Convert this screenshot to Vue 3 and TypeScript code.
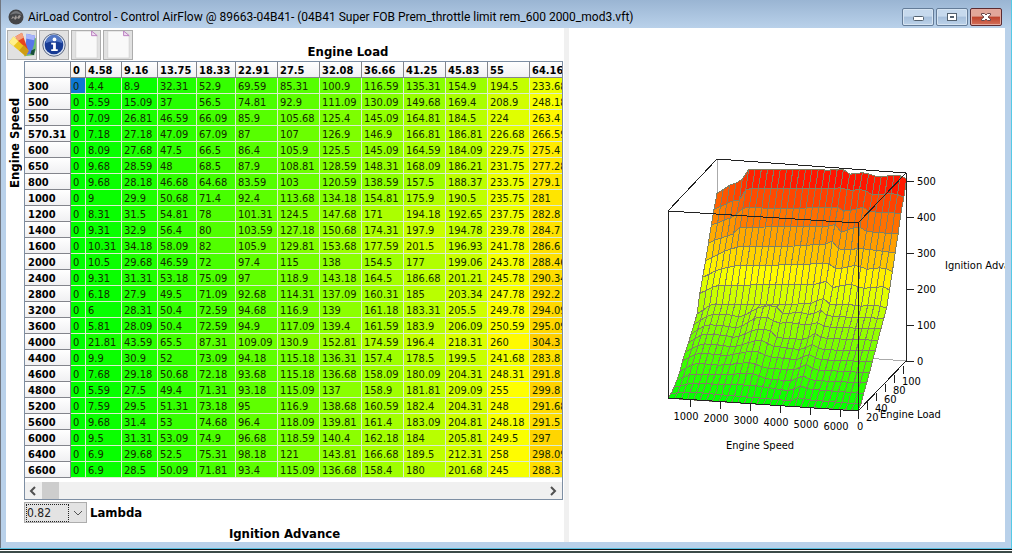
<script setup lang="ts">
import { ref } from 'vue'

const loads = ['0', '4.58', '9.16', '13.75', '18.33', '22.91', '27.5', '32.08', '36.66', '41.25', '45.83', '55', '64.16']
const columnWidths = [15, 36, 36, 39, 39, 42, 42, 42, 42, 42, 42, 42, 42]

const source = `
300|0 4.4 8.9 32.31 52.9 69.59 85.31 100.9 116.59 135.31 154.9 194.5 233.68
500|0 5.59 15.09 37 56.5 74.81 92.9 111.09 130.09 149.68 169.4 208.9 248.18
550|0 7.09 26.81 46.59 66.09 85.9 105.68 125.4 145.09 164.81 184.5 224 263.4
570.31|0 7.18 27.18 47.09 67.09 87 107 126.9 146.9 166.81 186.81 226.68 266.59
600|0 8.09 27.68 47.5 66.5 86.4 105.9 125.5 145.09 164.59 184.09 229.75 275.4
650|0 9.68 28.59 48 68.5 87.9 108.81 128.59 148.31 168.09 186.21 231.75 277.28
800|0 9.68 28.18 46.68 64.68 83.59 103 120.59 138.59 157.5 188.37 233.75 279.1
1000|0 9 29.9 50.68 71.4 92.4 113.68 134.18 154.81 175.9 190.5 235.75 281
1200|0 8.31 31.5 54.81 78 101.31 124.5 147.68 171 194.18 192.65 237.75 282.8
1400|0 9.31 32.9 56.4 80 103.59 127.18 150.68 174.31 197.9 194.78 239.78 284.7
1600|0 10.31 34.18 58.09 82 105.9 129.81 153.68 177.59 201.5 196.93 241.78 286.6
2000|0 10.5 29.68 46.59 72 97.4 115 138 154.5 177 199.06 243.78 288.46
2400|0 9.31 31.31 53.18 75.09 97 118.9 143.18 164.5 186.68 201.21 245.78 290.34
2800|0 6.18 27.9 49.5 71.09 92.68 114.31 137.09 160.31 185 203.34 247.78 292.2
3200|0 6 28.31 50.4 72.59 94.68 116.9 139 161.18 183.31 205.5 249.78 294.09
3600|0 5.81 28.09 50.4 72.59 94.9 117.09 139.4 161.59 183.9 206.09 250.59 295.09
4000|0 21.81 43.59 65.5 87.31 109.09 130.9 152.81 174.59 196.4 218.31 260 304.3
4400|0 9.9 30.9 52 73.09 94.18 115.18 136.31 157.4 178.5 199.5 241.68 283.8
4600|0 7.68 29.18 50.68 72.18 93.68 115.18 136.68 158.09 180.09 204.31 248.31 291.8
4800|0 5.59 27.5 49.4 71.31 93.18 115.09 137 158.9 181.81 209.09 255 299.8
5200|0 7.59 29.5 51.31 73.18 95 116.9 138.68 160.59 182.4 204.31 248 291.68
5600|0 9.68 31.4 53 74.68 96.4 118.09 139.81 161.4 183.09 204.81 248.18 291.5
6000|0 9.5 31.31 53.09 74.9 96.68 118.59 140.4 162.18 184 205.81 249.5 297
6400|0 6.9 29.68 52.5 75.31 98.18 121 143.81 166.68 189.5 212.31 258 298.09
6600|0 6.9 28.5 50.09 71.81 93.4 115.09 136.68 158.4 180 201.68 245 288.3`

const rows = source.trim().split('\n').map((line) => {
  const [speed, values] = line.split('|')
  return { speed, values: values.split(' ') }
})

function heat(value: number): string {
  const v = Math.max(0, Math.min(510, value))
  return v < 255 ? `rgb(${Math.round(v)},255,0)` : `rgb(255,${Math.round(510 - v)},0)`
}

const lambda = ref('0.82')
const tableView = ref<HTMLDivElement | null>(null)
function scrollTable(step: number) {
  tableView.value?.scrollBy({ left: step })
}

// Surface profiles, front to back, as x/y pairs in thirds of a chart unit.
const profiles: number[][] = [
  [25, 430, 592, 467],
  [34, 415, 90, 411, 400, 438, 415, 427, 450, 435, 600, 447],
  [45, 397, 90, 385, 280, 391, 390, 408, 420, 392, 450, 403, 610, 415],
  [50, 375, 90, 358, 150, 360, 280, 355, 320, 372, 400, 378, 425, 360, 455, 376, 617, 384],
  [58, 350, 105, 324, 180, 331, 270, 322, 320, 340, 410, 345, 435, 326, 465, 345, 625, 353],
  [67, 318, 115, 293, 200, 302, 285, 286, 325, 305, 420, 315, 440, 294, 475, 314, 635, 320],
  [76, 290, 125, 266, 200, 272, 215, 278, 300, 253, 335, 273, 430, 285, 450, 265, 485, 284, 643, 288],
  [85, 263, 130, 236, 200, 242, 225, 249, 290, 222, 330, 225, 350, 248, 440, 254, 458, 232, 490, 250, 651, 256],
  [93, 237, 140, 208, 215, 215, 232, 222, 290, 186, 325, 187, 355, 206, 380, 201, 446, 211, 467, 200, 497, 216, 660, 222],
  [102, 208, 150, 178, 215, 180, 240, 188, 300, 155, 345, 151, 365, 175, 430, 173, 455, 182, 478, 163, 505, 184, 669, 190],
  [110, 178, 155, 147, 200, 147, 300, 150, 345, 149, 450, 146, 490, 130, 515, 152, 560, 146, 595, 154, 650, 150, 680, 160],
  [120, 115, 170, 91, 470, 88, 500, 78, 518, 98, 570, 87, 610, 100, 670, 95, 688, 105],
  [130, 67, 175, 43, 240, 30, 370, 30, 505, 25, 530, 43, 590, 30, 620, 43, 670, 37, 695, 50],
  [137, 17, 190, -10, 235, -25, 400, -27, 500, -33, 515, -43, 540, -13, 600, -20, 702, -7],
  [148, -35, 160, -43, 220, -63, 240, -83, 400, -85, 500, -85, 525, -92, 543, -68, 595, -87, 620, -70, 712, -63],
  [157, -90, 225, -117, 250, -142, 370, -140, 510, -142, 530, -145, 555, -130, 610, -143, 630, -130, 722, -125],
  [165, -138, 220, -163, 240, -165, 260, -200, 510, -198, 540, -202, 570, -193, 610, -198, 635, -180, 705, -185, 728, -173],
  [173, -185, 210, -210, 242, -220, 265, -256, 530, -255, 548, -258, 570, -242, 615, -248, 640, -237, 680, -237, 720, -238, 740, -229],
]

function sample(profile: number[], x: number): number {
  if (x <= profile[0]) return profile[1]
  for (let i = 2; i < profile.length; i += 2) {
    if (x <= profile[i]) {
      const t = (x - profile[i - 2]) / (profile[i] - profile[i - 2])
      return profile[i - 1] + t * (profile[i + 1] - profile[i - 1])
    }
  }
  return profile[profile.length - 1]
}

interface Vertex { x: number; y: number; z: number }
const segments = 30
const lastProfile = profiles.length - 1
const mesh: Vertex[][] = profiles.map((profile, r) => {
  const depth = r / lastProfile
  return Array.from({ length: segments + 1 }, (_, c) => {
    const across = c / segments
    const px = 25 + depth * 146 + across * 569
    const x = 91 + px / 3
    const y = 227 + sample(profile, px) / 3
    return { x, y, z: (370 + 12.5 * across - 51 * depth - y) / 0.36 }
  })
})

const facets: { points: string; fill: string }[] = []
for (let r = lastProfile - 1; r >= 0; r--) {
  for (let c = 0; c < segments; c++) {
    const corners = [mesh[r][c], mesh[r][c + 1], mesh[r + 1][c + 1], mesh[r + 1][c]]
    facets.push({
      points: corners.map((p) => `${p.x.toFixed(1)},${p.y.toFixed(1)}`).join(' '),
      fill: heat(corners.reduce((sum, p) => sum + p.z, 0) / 4),
    })
  }
}

const speedTicks = [1000, 2000, 3000, 4000, 5000, 6000].map((value, i) => ({ value, x: 121 + i * 30, y: 371 + i * 2 }))
const loadTicks = [0, 20, 40, 60, 80, 100].map((value, i) => ({ value, x: 289 + i * 9, y: 383 - i * 9 }))
const heightTicks = [0, 100, 200, 300, 400, 500].map((value, i) => ({ value, y: 333 - i * 36 }))
</script>

<template>
  <main class="window">
    <header class="titlebar">
      <svg class="app-icon" viewBox="0 0 16 16" aria-hidden="true">
        <circle cx="8" cy="8" r="7.5" fill="#444548" />
        <path d="M2 6Q8-2 14 6Q8 3 2 6" fill="#74767a" />
        <path d="M3 10 5 7l1 2 2-3 1 3 2-3 2 1-2 3-2-1-2 2-1-2z" fill="#a29c99" />
      </svg>
      <h1>AirLoad Control - Control AirFlow @ 89663-04B41- (04B41 Super FOB Prem_throttle limit rem_600 2000_mod3.vft)</h1>
      <div class="window-buttons">
        <button type="button" aria-label="Minimize">
          <svg viewBox="0 0 30 16"><rect x="10.5" y="7.5" width="10" height="4" rx="1" fill="#fff" stroke="#53616f" /></svg>
        </button>
        <button type="button" aria-label="Maximize">
          <svg viewBox="0 0 30 16"><rect x="10.5" y="4.5" width="9" height="7" fill="#fff" stroke="#53616f" /><rect x="13.5" y="7.5" width="3" height="1" fill="#9db5cf" stroke="#53616f" /></svg>
        </button>
        <button type="button" class="close" aria-label="Close">
          <svg viewBox="0 0 30 16"><path d="M10.5 4.5h3l1.5 1.5 1.5-1.5h3v1.500l-2.500 2 2.500 2v1.500h-3l-1.500-1.500-1.500 1.500h-3v-1.500l2.500-2-2.500-2z" fill="#fff" stroke="#694648" /></svg>
        </button>
      </div>
    </header>

    <div class="client">
      <section class="editor">
        <div class="top">
          <div class="toolbar">
            <button type="button" aria-label="Colours">
              <svg viewBox="0 0 30 30">
                <path d="M17 27 27 6l3 2v12l-3 6z" fill="#72bd72" />
                <path d="M18 26 20 3l9 2-1 9-3 10z" fill="#5876e8" />
                <path d="m20 3 9 2-1 5-9-2z" fill="#a9b5fa" />
                <path d="m25 21 4-2-1 7-4-1z" fill="#174d38" />
                <path d="M17 25 8 6l7-4 7 20z" fill="#e64420" />
                <path d="m8 6 7-4 2 5-7 4z" fill="#f5a17c" />
                <path d="M19 27 1 12l5-6 16 15z" fill="#ecc622" />
                <path d="m1 12 5-6 5 5-5 5z" fill="#fff08a" />
                <path d="m12 21 5-6 5 6-3 6z" fill="#cf9d13" />
              </svg>
            </button>
            <button type="button" aria-label="Information">
              <svg viewBox="0 0 30 30">
                <circle cx="15" cy="15" r="12" fill="#dce4f2" stroke="#546078" />
                <circle cx="15" cy="15" r="10" fill="#173b94" />
                <path d="M6 13a9 9 0 0 1 18 0Q15 9 6 13" fill="#5277c5" />
                <circle cx="15.5" cy="9" r="2" fill="#fff" />
                <path d="M12 12.500h5v7h2v2h-7v-2h2v-5h-2z" fill="#fff" />
              </svg>
            </button>
            <button v-for="name in ['New table', 'New map']" :key="name" type="button" :aria-label="name">
              <svg viewBox="0 0 30 30">
                <path d="M4 0h17l6 6v23H4z" fill="#f9f9f9" stroke="#d3d3d3" />
                <path d="M21 0v5h6z" fill="#f0dcf2" stroke="#b77bbd" />
              </svg>
            </button>
          </div>
          <h2>Engine Load</h2>
        </div>

        <div class="map">
          <h2 class="speed-label">Engine Speed</h2>
          <div class="grid-frame">
            <div ref="tableView" class="table-view">
              <table>
                <colgroup>
                  <col class="speed-col">
                  <col v-for="(w, i) in columnWidths" :key="i" :style="{ width: w + 'px' }">
                </colgroup>
                <thead>
                  <tr>
                    <td class="corner"></td>
                    <th v-for="load in loads" :key="load" scope="col">{{ load }}</th>
                  </tr>
                </thead>
                <tbody>
                  <tr v-for="(row, r) in rows" :key="row.speed">
                    <th scope="row">{{ row.speed }}</th>
                    <td
                      v-for="(value, c) in row.values"
                      :key="c"
                      :style="{ backgroundColor: r === 0 && c === 0 ? '#0f78d4' : heat(Number(value)) }"
                    >{{ value }}</td>
                  </tr>
                </tbody>
              </table>
            </div>
            <div class="scrollbar">
              <button type="button" aria-label="Scroll left" @click="scrollTable(-42)">
                <svg viewBox="0 0 16 16"><path d="M10 4 6 8l4 4" /></svg>
              </button>
              <div class="track"><div class="thumb"></div></div>
              <button type="button" aria-label="Scroll right" @click="scrollTable(42)">
                <svg viewBox="0 0 16 16"><path d="m6 4 4 4-4 4" /></svg>
              </button>
            </div>
          </div>
        </div>

        <div class="lambda">
          <span class="picker">
            <select id="lambda" v-model="lambda"><option>0.82</option></select>
            <svg viewBox="0 0 10 6" aria-hidden="true"><path d="m1 1 4 4 4-4" /></svg>
          </span>
          <label for="lambda">Lambda</label>
        </div>
        <h2 class="value-label">Ignition Advance</h2>
      </section>

      <div class="splitter"></div>

      <section class="chart">
        <svg viewBox="0 0 436 513" role="img" aria-label="Ignition Advance surface">
          <g class="box-back">
            <path d="M148 131V319L337 333" />
          </g>
          <g class="surface">
            <polygon v-for="(facet, i) in facets" :key="i" :points="facet.points" :fill="facet.fill" />
          </g>
          <g class="box-front">
            <path d="M99 183 148 131 337 145 289 195 99 183V370L289 383V195M337 145V333L289 383" />
            <path v-for="t in speedTicks" :key="'s' + t.value" :d="`M${t.x} ${t.y}v8`" />
            <path v-for="t in loadTicks" :key="'l' + t.value" :d="`M${t.x} ${t.y}v8`" />
            <path v-for="t in heightTicks" :key="'h' + t.value" :d="`M337 ${t.y}h8`" />
          </g>
          <g class="labels">
            <text v-for="t in speedTicks" :key="'s' + t.value" :x="t.x - 4" :y="t.y + 21" text-anchor="middle">{{ t.value }}</text>
            <text v-for="t in loadTicks" :key="'l' + t.value" :x="t.x - 1" :y="t.y + 19">{{ t.value }}</text>
            <text v-for="t in heightTicks" :key="'h' + t.value" x="348" :y="t.y + 4">{{ t.value }}</text>
            <text x="311" y="390">Engine Load</text>
            <text x="157" y="421">Engine Speed</text>
            <text x="376" y="241">Ignition Advance</text>
          </g>
        </svg>
      </section>
    </div>
  </main>
</template>

<style>
body {
  margin: 0;
  background: #fff;
}
</style>

<style scoped>
* {
  box-sizing: border-box;
}

.window {
  display: flex;
  flex-direction: column;
  min-height: 553px;
  padding: 0 7px 12px 6px;
  overflow: hidden;
  color: #000;
  font-family: "DejaVu Sans Condensed", "Noto Sans", sans-serif;
  background:
    linear-gradient(to top, #fff 1px, #3c4b48 1px 3px, #fff 3px 4px, #111 4px 5px, #58bfe0 5px 6px, transparent 6px),
    linear-gradient(to right, #717781 1px, transparent 1px),
    linear-gradient(to left, #55c9e6 1px, transparent 1px),
    linear-gradient(#9ab5d3, #b9d1ea 28px);
}

button {
  padding: 0;
  font: inherit;
}

h1,
h2 {
  margin: 0;
  white-space: nowrap;
}

h2,
label {
  font-size: 13px;
  font-weight: bold;
  line-height: 16px;
}

.titlebar {
  display: flex;
  align-items: center;
  height: 28px;
  padding: 5px 3px 0 2px;
}

.app-icon {
  width: 16px;
  height: 16px;
  margin-right: 4px;
}

h1 {
  flex: 1;
  overflow: hidden;
  font-family: Roboto, "Noto Sans", sans-serif;
  font-size: 12px;
  font-weight: normal;
  line-height: 18px;
}

.window-buttons {
  display: flex;
  gap: 2px;
}

.window-buttons button {
  width: 32px;
  height: 18px;
  background: linear-gradient(#c6d9ed 45%, #a6bfdb 50%, #bcd2e9);
  border: 1px solid #647c98;
  border-radius: 2px;
  box-shadow: inset 0 0 0 1px #d6e4f2;
}

.window-buttons .close {
  background: linear-gradient(#e1a79a 45%, #bd432c 50%, #d4705a);
  border-color: #5b2b31;
  box-shadow: inset 0 0 0 1px #e4a99e;
}

.window-buttons svg {
  display: block;
  width: 30px;
  height: 16px;
}

.client {
  display: grid;
  flex: 1;
  grid-template-columns: minmax(0, 558fr) 5px minmax(0, 436fr);
  background: #fff;
}

.editor {
  display: flex;
  flex-direction: column;
  min-width: 0;
  padding-right: 1px;
}

.top {
  display: flex;
  align-items: flex-end;
  padding: 2px 0 1px 1px;
}

.top h2 {
  flex: 1;
  text-align: center;
}

.toolbar {
  display: flex;
  gap: 2px;
}

.toolbar button {
  width: 30px;
  height: 30px;
  background: #e1e1e1;
  border: 1px solid #adadad;
}

.toolbar svg {
  display: block;
  width: 28px;
  height: 28px;
}

.map {
  display: flex;
}

.speed-label {
  width: 18px;
  height: 127px;
  line-height: 18px;
  writing-mode: vertical-rl;
  transform: rotate(180deg);
}

.grid-frame {
  flex: 1;
  min-width: 0;
  border: 1px solid #7d8ea3;
}

.table-view {
  overflow: hidden;
}

table {
  width: 547px;
  table-layout: fixed;
  border-spacing: 0;
}

.speed-col {
  width: 46px;
}

th,
td {
  height: 16px;
  padding: 3px 0 0 2px;
  overflow: hidden;
  font-size: 11px;
  line-height: 12px;
  text-align: left;
  white-space: nowrap;
  border-right: 1px solid #dcecd0;
  border-bottom: 1px solid #dcecd0;
}

td {
  color: #132b00;
}

th,
.corner {
  color: #000;
  background: linear-gradient(#fff, #f0f0f2);
  border-color: #83858c;
}

tbody th {
  padding-left: 3px;
}

.scrollbar {
  display: flex;
  height: 17px;
  margin-top: 4px;
  background: #f0f0f0;
}

.scrollbar button {
  width: 17px;
  background: transparent;
  border: 0;
}

.scrollbar svg {
  display: block;
  width: 16px;
  height: 16px;
  fill: none;
  stroke: #505050;
  stroke-width: 2;
}

.track {
  flex: 1;
}

.thumb {
  width: 17px;
  height: 100%;
  background: #cdcdcd;
}

.lambda {
  display: flex;
  gap: 3px;
  align-items: center;
  padding: 2px 0 0 18px;
}

.picker {
  display: grid;
  align-items: center;
}

.picker > * {
  grid-area: 1 / 1;
}

select {
  width: 63px;
  height: 21px;
  padding: 0 0 0 2px;
  color: #222;
  font-family: inherit;
  font-size: 12px;
  appearance: none;
  background: #e3e3e3;
  border: 1px solid #adadad;
  border-radius: 0;
}

.picker svg {
  justify-self: end;
  width: 10px;
  height: 6px;
  margin-right: 4px;
  pointer-events: none;
  fill: none;
  stroke: #555;
}

.picker::before {
  z-index: 1;
  grid-area: 1 / 1;
  width: 41px;
  height: 16px;
  margin-left: 2px;
  pointer-events: none;
  content: "";
  border: 1px dotted #222;
}

.value-label {
  padding-top: 3px;
  text-align: center;
}

.splitter {
  background: #f0f0f0;
}

.chart {
  min-width: 0;
  overflow: hidden;
}

.chart svg {
  display: block;
  width: 100%;
}

.box-back path,
.box-front path {
  fill: none;
  stroke: #222;
  stroke-width: 1;
  shape-rendering: crispEdges;
}

.box-back path {
  stroke: #aaa;
}

.surface polygon {
  stroke: #808064;
  stroke-width: 1;
  shape-rendering: crispEdges;
}

.labels {
  font-size: 11px;
}
</style>
